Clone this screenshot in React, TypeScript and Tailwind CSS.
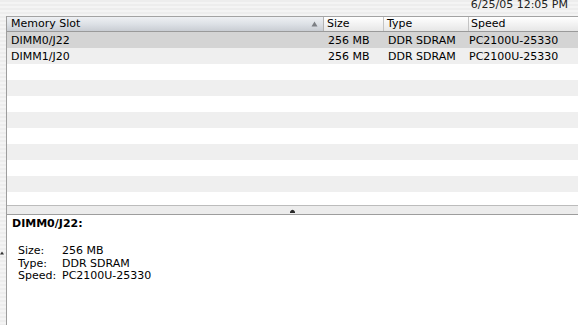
import React from "react";

const font = { fontFamily: '"DejaVu Sans", "Liberation Sans", sans-serif' };

const rows = [
  { slot: "DIMM0/J22", size: "256 MB", type: "DDR SDRAM", speed: "PC2100U-25330" },
  { slot: "DIMM1/J20", size: "256 MB", type: "DDR SDRAM", speed: "PC2100U-25330" },
];

export default function App() {
  const empty = Array.from({ length: 9 });
  return (
    <div
      className="w-[578px] h-[325px] overflow-hidden flex flex-col text-[11px] text-black bg-[repeating-linear-gradient(180deg,#ededed_0px,#ededed_2px,#f4f4f4_2px,#f4f4f4_4px)]"
      style={font}
    >
      {/* timestamp */}
      <div className="h-[16px] flex justify-end pr-[10px] overflow-hidden">
        <div className="leading-[13px] mt-[-2px] text-[#222]">6/25/05 12:05 PM</div>
      </div>

      <div className="flex flex-1 min-h-0">
        {/* gutter */}
        <div className="w-[6px] shrink-0 flex flex-col">
          <div className="h-[235px]" />
          <svg width="4" height="4" viewBox="0 0 4 4">
            <path d="M0 3.5 L2 0.5 L4 3.5 Z" fill="#333" />
          </svg>
        </div>

        {/* main box */}
        <div className="flex-1 flex flex-col border-l border-[#9d9d9d] min-w-0">
          {/* table */}
          <div className="h-[190px] flex flex-col bg-white border-t border-b border-t-[#a3a3a3] border-b-[#bcbcbc]">
            {/* header */}
            <div className="h-[15px] flex border-b border-[#9a9a9a] leading-[14px] bg-gradient-to-b from-[#ffffff] to-[#e6e6e6]">
              <div className="w-[317px] shrink-0 flex items-center pl-[4px] pr-[5px] border-r border-[#b3b3b3] bg-gradient-to-b from-[#eef0f3] via-[#dde1e6] to-[#c9cdd3]">
                <span className="flex-1">Memory Slot</span>
                <svg width="7" height="6" viewBox="0 0 7 6">
                  <path d="M3.5 0.5 L6.5 5.5 L0.5 5.5 Z" fill="#7c7f84" />
                </svg>
              </div>
              <div className="w-[60px] shrink-0 pl-[3px] border-r border-[#c4c4c4]">Size</div>
              <div className="w-[85px] shrink-0 pl-[3px] border-r border-[#c4c4c4]">Type</div>
              <div className="flex-1 pl-[2px]">Speed</div>
            </div>
            {/* rows */}
            <div className="flex-1 overflow-hidden flex flex-col">
              {rows.map((r, i) => (
                <div
                  key={r.slot}
                  className={`h-[16px] shrink-0 flex leading-[16px] pt-[1px] ${i === 0 ? "bg-[#d4d4d4]" : "bg-[#efefef]"}`}
                >
                  <div className="w-[317px] shrink-0 pl-[4px]">{r.slot}</div>
                  <div className="w-[60px] shrink-0 pl-[4px]">{r.size}</div>
                  <div className="w-[85px] shrink-0 pl-[4px]">{r.type}</div>
                  <div className="flex-1 pl-0">{r.speed}</div>
                </div>
              ))}
              {empty.map((_, i) => (
                <div
                  key={i}
                  className={`h-[16px] shrink-0 ${i % 2 === 0 ? "bg-white" : "bg-[#efefef]"}`}
                />
              ))}
            </div>
          </div>

          {/* splitter */}
          <div className="h-[8px] shrink-0 bg-[#ececec] flex justify-center items-center">
            <svg width="5" height="4" viewBox="0 0 5 4" className="mt-[1px]">
              <path d="M0 4 L0 2.5 Q2.5 -1 5 2.5 L5 4 Z" fill="#2a2a2a" />
            </svg>
          </div>

          {/* detail panel */}
          <div className="flex-1 bg-white border-t border-[#9d9d9d] pt-[2px] pl-[5px]">
            <div className="font-bold leading-[13px]">DIMM0/J22:</div>
            <div className="mt-[15px] pl-[6px] leading-[12.5px] grid grid-cols-[44px_auto]">
              <span>Size:</span>
              <span>256 MB</span>
              <span>Type:</span>
              <span>DDR SDRAM</span>
              <span>Speed:</span>
              <span>PC2100U-25330</span>
            </div>
          </div>
        </div>
      </div>
    </div>
  );
}
